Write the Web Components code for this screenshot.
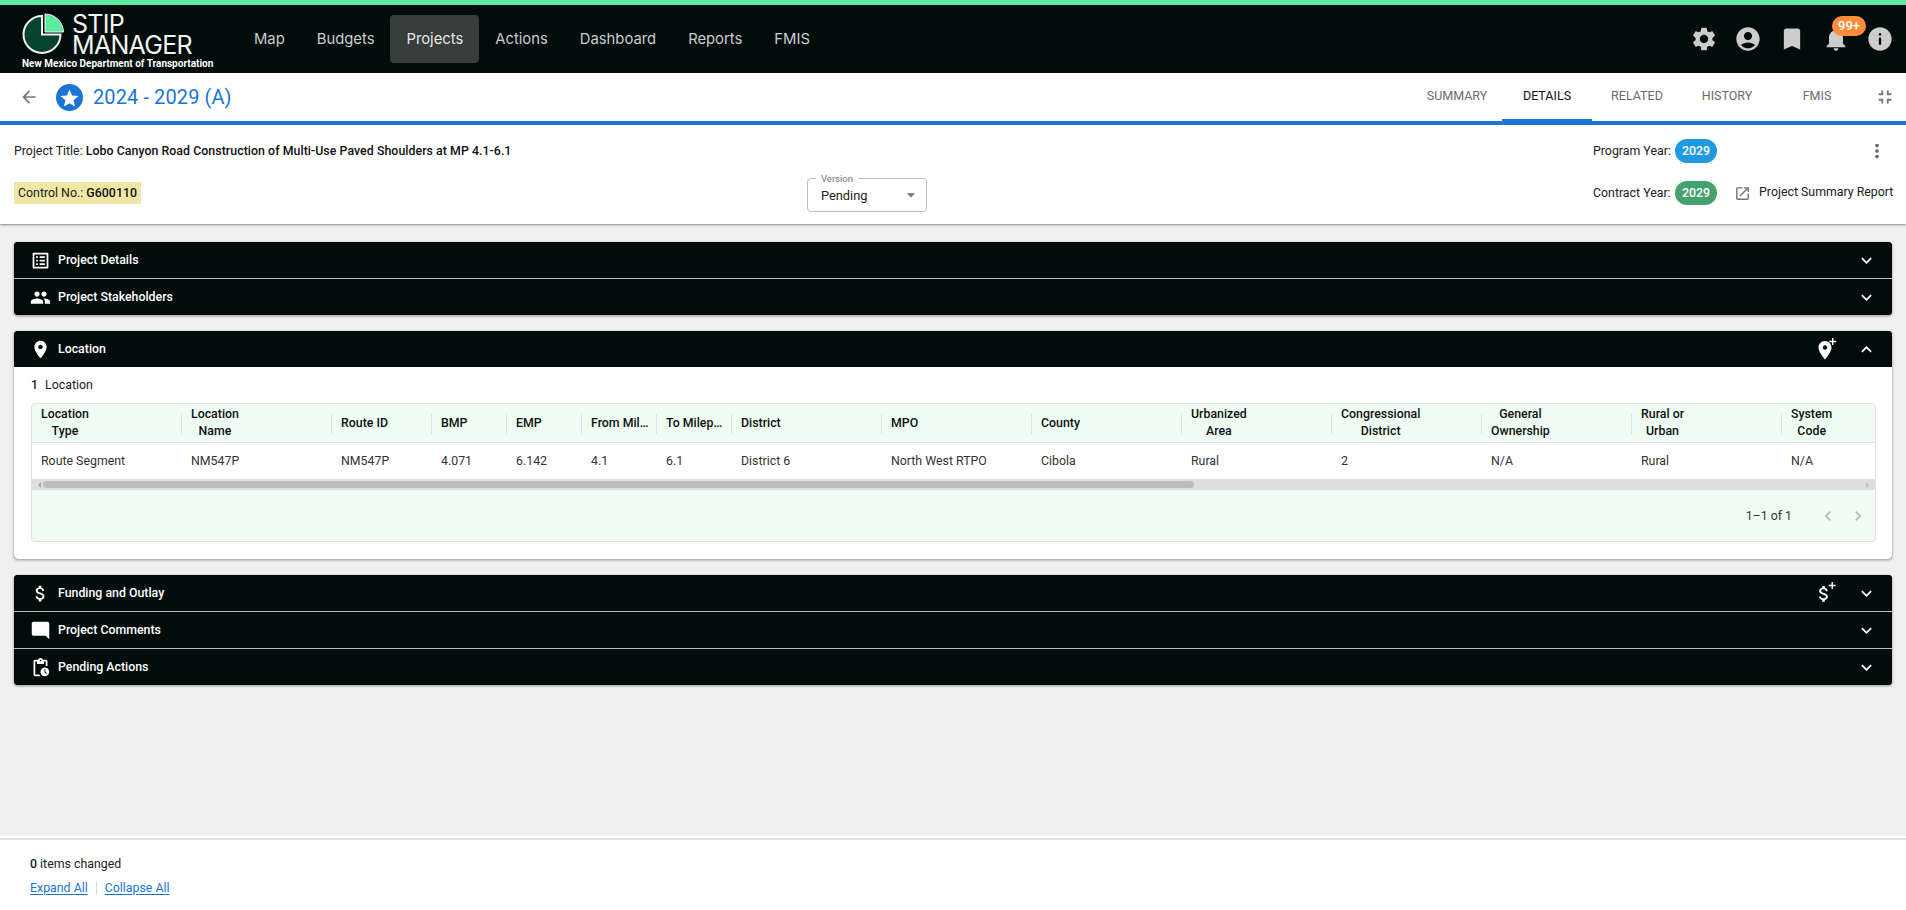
<!DOCTYPE html>
<html>
<head>
<meta charset="utf-8">
<title>STIP Manager</title>
<style>
  html, body { margin: 0; height: 100%; overflow: hidden; }
  body { font-family: Roboto, "Liberation Sans", sans-serif; font-size: 12.35px; color: #212121; background: #f0f0f0; }
  stip-page { height: 910px; }
  acc-group { margin-bottom: 16px; }
</style>
</head>
<body>
<stip-page>
  <app-header></app-header>
  <record-bar></record-bar>
  <project-summary></project-summary>
  <acc-group>
    <acc-row icon="listAlt">Project Details</acc-row>
    <acc-row icon="people">Project Stakeholders</acc-row>
  </acc-group>
  <acc-group>
    <acc-row icon="place" action="addPlace" open>Location</acc-row>
    <location-panel></location-panel>
  </acc-group>
  <acc-group>
    <acc-row icon="money" action="addMoney">Funding and Outlay</acc-row>
    <acc-row icon="comment">Project Comments</acc-row>
    <acc-row icon="pending">Pending Actions</acc-row>
  </acc-group>
  <changes-bar slot="footer"></changes-bar>
</stip-page>

<script>
const ICONS = {
  settings: 'M19.14 12.94c.04-.3.06-.61.06-.94 0-.32-.02-.64-.07-.94l2.03-1.58c.18-.14.23-.41.12-.61l-1.92-3.32c-.12-.22-.37-.29-.59-.22l-2.39.96c-.5-.38-1.03-.7-1.62-.94l-.36-2.54c-.04-.24-.24-.41-.48-.41h-3.84c-.24 0-.43.17-.47.41l-.36 2.54c-.59.24-1.13.57-1.62.94l-2.39-.96c-.22-.08-.47 0-.59.22L2.74 8.87c-.12.21-.08.47.12.61l2.03 1.58c-.05.3-.09.63-.09.94s.02.64.07.94l-2.03 1.58c-.18.14-.23.41-.12.61l1.92 3.32c.12.22.37.29.59.22l2.39-.96c.5.38 1.03.7 1.62.94l.36 2.54c.05.24.24.41.48.41h3.84c.24 0 .44-.17.47-.41l.36-2.54c.59-.24 1.13-.56 1.62-.94l2.39.96c.22.08.47 0 .59-.22l1.92-3.32c.12-.22.07-.47-.12-.61l-2.01-1.58zM12 15.6c-1.98 0-3.6-1.62-3.6-3.6s1.62-3.6 3.6-3.6 3.6 1.62 3.6 3.6-1.62 3.6-3.6 3.6z',
  account: 'M12 2C6.48 2 2 6.48 2 12s4.48 10 10 10 10-4.48 10-10S17.52 2 12 2zm0 4c1.93 0 3.5 1.57 3.5 3.5S13.93 13 12 13s-3.5-1.57-3.5-3.5S10.07 6 12 6zm0 14c-2.03 0-4.43-.82-6.14-2.88C7.55 15.8 9.68 15 12 15s4.45.8 6.14 2.12C16.43 19.18 14.03 20 12 20z',
  bookmark: 'M17 3H7c-1.1 0-1.99.9-1.99 2L5 21l7-3 7 3V5c0-1.1-.9-2-2-2z',
  bell: 'M12 22c1.1 0 2-.9 2-2h-4c0 1.1.89 2 2 2zm6-6v-5c0-3.07-1.64-5.64-4.5-6.32V4c0-.83-.67-1.5-1.5-1.5s-1.5.67-1.5 1.5v.68C7.63 5.36 6 7.92 6 11v5l-2 2v1h16v-1l-2-2z',
  info: 'M12 2C6.48 2 2 6.48 2 12s4.48 10 10 10 10-4.48 10-10S17.52 2 12 2zm1 15h-2v-6h2v6zm0-8h-2V7h2v2z',
  back: 'M20 11H7.83l5.59-5.59L12 4l-8 8 8 8 1.41-1.41L7.83 13H20v-2z',
  shrink: 'M5 16h3v3h2v-5H5v2zm3-8H5v2h5V5H8v3zm6 11h2v-3h3v-2h-5v5zm2-11V5h-2v5h5V8h-3z',
  listAlt: 'M19 5v14H5V5h14m1.1-2H3.9c-.5 0-.9.4-.9.9v16.2c0 .4.4.9.9.9h16.2c.4 0 .9-.5.9-.9V3.9c0-.5-.5-.9-.9-.9zM11 7h6v2h-6V7zm0 4h6v2h-6v-2zm0 4h6v2h-6zM7 7h2v2H7zm0 4h2v2H7zm0 4h2v2H7z',
  people: 'M16 11c1.66 0 2.99-1.34 2.99-3S17.66 5 16 5c-1.66 0-3 1.34-3 3s1.34 3 3 3zm-8 0c1.66 0 2.99-1.34 2.99-3S9.66 5 8 5C6.34 5 5 6.34 5 8s1.34 3 3 3zm0 2c-2.33 0-7 1.17-7 3.5V19h14v-2.5c0-2.33-4.67-3.5-7-3.5zm8 0c-.29 0-.62.02-.97.05 1.16.84 1.97 1.97 1.97 3.45V19h6v-2.5c0-2.33-4.67-3.5-7-3.5z',
  place: 'M12 2C8.13 2 5 5.13 5 9c0 5.25 7 13 7 13s7-7.75 7-13c0-3.87-3.13-7-7-7zm0 9.5c-1.38 0-2.5-1.12-2.5-2.5s1.12-2.5 2.5-2.5 2.5 1.12 2.5 2.5-1.12 2.5-2.5 2.5z',
  addPlace: 'M11 4C7.4 4 4.500 6.900 4.500 10.500 4.500 15.400 11 22.500 11 22.500s6.500-7.100 6.500-12c0-3.600-2.900-6.500-6.500-6.500zm0 8.800c-1.270 0-2.300-1.030-2.300-2.300S9.730 8.200 11 8.200s2.300 1.030 2.300 2.300-1.030 2.300-2.300 2.300zM18 1h1.400v2.800h2.800v1.400h-2.800V8H18V5.200h-2.800V3.800H18z',
  money: 'M11.8 10.900c-2.270-.590-3-1.200-3-2.150 0-1.090 1.010-1.850 2.700-1.850 1.780 0 2.440.850 2.500 2.100h2.210c-.070-1.720-1.120-3.300-3.210-3.810V3h-3v2.160c-1.940.420-3.500 1.680-3.500 3.610 0 2.310 1.910 3.460 4.700 4.130 2.500.600 3 1.480 3 2.410 0 .690-.490 1.790-2.700 1.790-2.060 0-2.870-.920-2.980-2.100h-2.200c.120 2.190 1.760 3.420 3.680 3.830V21h3v-2.150c1.950-.370 3.500-1.500 3.500-3.550 0-2.840-2.430-3.810-4.700-4.400z',
  addMoney: 'M9.800 11.900c-2-.520-2.650-1.060-2.650-1.900 0-.960.890-1.630 2.380-1.630 1.570 0 2.150.750 2.200 1.850h1.950c-.060-1.520-.990-2.910-2.830-3.360V5H8.200v1.840C6.490 7.210 5.100 8.320 5.100 10.020c0 2.040 1.690 3.050 4.150 3.640 2.200.530 2.650 1.310 2.650 2.130 0 .610-.430 1.580-2.380 1.580-1.820 0-2.530-.810-2.630-1.850H4.950c.110 1.930 1.550 3.020 3.250 3.380V20.800h2.650v-1.900c1.720-.330 3.090-1.320 3.090-3.130 0-2.510-2.150-3.360-4.140-3.870zM17.500 1h1.400v2.800h2.800v1.400h-2.800V8h-1.400V5.200h-2.800V3.800h2.800z',
  comment: 'M4 2h16c1.100 0 2 .9 2 2v18l-4-4H4c-1.100 0-2-.9-2-2V4c0-1.100.9-2 2-2z',
  pending: 'M17 12c-2.760 0-5 2.240-5 5s2.240 5 5 5 5-2.240 5-5-2.240-5-5-5zm1.650 7.350L16.500 17.200V14h1v2.790l1.850 1.850-.7.710zM18 3h-3.180C14.400 1.840 13.300 1 12 1s-2.400.840-2.820 2H6c-1.100 0-2 .9-2 2v15c0 1.100.9 2 2 2h6.110c-.590-.570-1.070-1.250-1.420-2H6V5h2v3h8V5h2v5.080c.710.100 1.380.310 2 .600V5c0-1.100-.9-2-2-2zm-6 2c-.550 0-1-.450-1-1s.450-1 1-1 1 .450 1 1-.450 1-1 1z',
  expand: 'M16.59 8.590L12 13.170 7.410 8.590 6 10l6 6 6-6z',
  collapse: 'M12 8l-6 6 1.410 1.410L12 10.830l4.590 4.580L18 14z',
  launch: 'M19 19H5V5h7V3H5c-1.110 0-2 .9-2 2v14c0 1.100.890 2 2 2h14c1.100 0 2-.9 2-2v-7h-2v7zM14 3v2h3.590l-9.830 9.830 1.410 1.410L19 6.410V10h2V3h-7z',
  more: 'M12 8c1.100 0 2-.9 2-2s-.9-2-2-2-2 .9-2 2 .9 2 2 2zm0 2c-1.100 0-2 .9-2 2s.9 2 2 2 2-.9 2-2-.9-2-2-2zm0 6c-1.100 0-2 .9-2 2s.9 2 2 2 2-.9 2-2-.9-2-2-2z',
  left: 'M15.410 7.410L14 6l-6 6 6 6 1.410-1.410L10.830 12z',
  right: 'M10 6L8.590 7.410 13.170 12l-4.580 4.590L10 18l6-6z',
  dropdown: 'M7 10l5 5 5-5z'
};

class XIcon extends HTMLElement {
  connectedCallback() {
    const size = this.getAttribute('size') || 24;
    const root = this.shadowRoot || this.attachShadow({ mode: 'open' });
    root.innerHTML = `
      <style>
        :host { display: inline-flex; flex: none; width: ${size}px; height: ${size}px; color: inherit; }
        svg { width: 100%; height: 100%; fill: currentColor; display: block; }
      </style>
      <svg viewBox="0 0 24 24"><path d="${ICONS[this.getAttribute('name')]}"></path></svg>`;
  }
}
customElements.define('x-icon', XIcon);

class StipPage extends HTMLElement {
  constructor() {
    super();
    this.attachShadow({ mode: 'open' });
    this.shadowRoot.innerHTML = `
      <style>
        :host { display: flex; flex-direction: column; background: #f0f0f0; }
        .head { flex: none; }
        .main { flex: 1; min-height: 0; padding: 18px 14px 0; }
        .foot { flex: none; }
      </style>
      <div class="head"><slot name="top"></slot></div>
      <div class="main"><slot></slot></div>
      <div class="foot"><slot name="footer"></slot></div>`;
  }
  connectedCallback() {
    ['app-header', 'record-bar', 'project-summary'].forEach(tag => {
      this.querySelector(tag).slot = 'top';
    });
  }
}
customElements.define('stip-page', StipPage);

class AppHeader extends HTMLElement {
  constructor() {
    super();
    this.attachShadow({ mode: 'open' });
    const nav = ['Map', 'Budgets', 'Projects', 'Actions', 'Dashboard', 'Reports', 'FMIS'];
    this.shadowRoot.innerHTML = `
      <style>
        :host { display: flex; align-items: center; height: 68px; background: #020d0b; border-top: 5px solid #5fe8a0; color: #ccc; padding-right: 12px; }
        .logo { width: 216px; padding-left: 22px; flex: none; }
        .logo-top { display: flex; align-items: center; gap: 6px; height: 46px; margin-top: 3px; }
        .logo svg { flex: none; width: 44px; height: 44px; }
        .brand { font-family: Inter, sans-serif; font-weight: 400; font-size: 25px; line-height: 21px; color: #f2f2f2; letter-spacing: -.7px; }
        .tag { font-family: Roboto, sans-serif; font-weight: 700; font-size: 10px; line-height: 12px; color: #fff; white-space: nowrap; }
        nav { display: flex; height: 48px; align-items: center; }
        nav a { display: flex; align-items: center; height: 48px; padding: 0 16px; font-family: Inter, sans-serif; font-size: 14.8px; color: #ccc; border-radius: 4px; }
        nav a.on { background: #363d3b; color: #e6e6e6; }
        .tools { margin-left: auto; display: flex; gap: 16px; align-items: center; }
        .bell { position: relative; display: flex; }
        .badge { position: absolute; left: 10px; top: -9px; width: 34px; height: 20px; border-radius: 10px; background: #ff8c3a; color: #fff; font-size: 13px; line-height: 20px; text-align: center; font-weight: 500; }
      </style>
      <div class="logo">
        <div class="logo-top">
          <svg viewBox="0 0 44 44">
            <path d="M20 3 A18.500 18.500 0 1 0 38.500 21.500 L20 21.500 Z" fill="#06432f" stroke="#f0f0f0" stroke-width="2"/>
            <path d="M23 1 A18.500 18.500 0 0 1 41.500 19 L23 19 Z" fill="#5fe8a0" stroke="#f0f0f0" stroke-width="1"/>
          </svg>
          <div class="brand">STIP<br>MANAGER</div>
        </div>
        <div class="tag">New Mexico Department of Transportation</div>
      </div>
      <nav>${nav.map(n => `<a class="${n === 'Projects' ? 'on' : ''}">${n}</a>`).join('')}</nav>
      <div class="tools">
        <x-icon name="settings" size="28"></x-icon>
        <x-icon name="account" size="28"></x-icon>
        <x-icon name="bookmark" size="28"></x-icon>
        <span class="bell"><x-icon name="bell" size="28"></x-icon><span class="badge">99+</span></span>
        <x-icon name="info" size="28"></x-icon>
      </div>`;
  }
}
customElements.define('app-header', AppHeader);

class RecordBar extends HTMLElement {
  constructor() {
    super();
    this.attachShadow({ mode: 'open' });
    const tabs = ['SUMMARY', 'DETAILS', 'RELATED', 'HISTORY', 'FMIS'];
    this.shadowRoot.innerHTML = `
      <style>
        :host { display: flex; align-items: center; height: 48px; background: #fff; border-bottom: 4px solid #1976d2; padding-left: 19px; }
        .back { color: #757575; }
        .star { margin-left: 17px; width: 27px; height: 27px; display: block; flex: none; }
        h1 { margin: 0 0 0 10px; font-size: 20px; font-weight: 400; color: #1976d2; letter-spacing: .1px; }
        .tabs { margin-left: auto; display: flex; height: 48px; }
        .tab { width: 90px; display: flex; align-items: center; justify-content: center; font-size: 12.5px; color: #6b6b6b; padding-bottom: 3px; box-sizing: border-box; }
        .tab.on { color: #111; box-shadow: inset 0 -2px 0 #1976d2; }
        .shrink { color: #777; margin: 0 10px 0 12px; }
      </style>
      <x-icon class="back" name="back" size="20"></x-icon>
      <svg class="star" viewBox="0 0 27 27">
        <circle cx="13.500" cy="13.500" r="13.500" fill="#1976d2"/>
        <path fill="#fff" d="M13.500 19.200l5.560 3.360-1.480-6.330 4.920-4.260-6.470-.55L13.500 5.450l-2.530 5.970-6.470.55 4.920 4.260-1.480 6.330z"/>
      </svg>
      <h1>2024 - 2029 (A)</h1>
      <div class="tabs">${tabs.map(t => `<div class="tab ${t === 'DETAILS' ? 'on' : ''}">${t}</div>`).join('')}</div>
      <x-icon class="shrink" name="shrink" size="22"></x-icon>`;
  }
}
customElements.define('record-bar', RecordBar);

class ProjectSummary extends HTMLElement {
  constructor() {
    super();
    this.attachShadow({ mode: 'open' });
    this.shadowRoot.innerHTML = `
      <style>
        :host { display: grid; grid-template-columns: 793px 120px 1fr; grid-template-rows: 52px 47px; background: #fff; padding: 0 13px 0 14px; box-shadow: 0 1px 2px rgba(0,0,0,.45); position: relative; color: #212121; }
        b { font-weight: 500; color: #111; letter-spacing: .05px; }
        .title { grid-column: 1 / 3; align-self: center; }
        .top-right { display: flex; align-items: center; justify-content: space-between; padding-left: 666px; }
        .year { display: flex; align-items: center; }
        .year label { width: 82px; white-space: nowrap; }
        .chip { display: inline-block; height: 24px; line-height: 24px; padding: 0 7px; border-radius: 12px; color: #fff; font-weight: 500; }
        .blue { background: #1e9be0; }
        .green { background: #45a26f; }
        .dots { color: #666; margin-right: 5px; }
        .control { align-self: start; justify-self: start; margin-top: 5px; background: #f0e6a6; height: 22px; line-height: 22px; padding: 0 4px; }
        .bottom-right { display: flex; align-items: center; padding-left: 666px; height: 32px; }
        .report { display: flex; align-items: center; margin-left: 17px; white-space: nowrap; gap: 8px; margin-top: -2px; }
        .report x-icon { color: #757575; margin-top: 3px; }
        version-select { align-self: start; margin-top: 1px; }
      </style>
      <div class="title">Project Title: <b>Lobo Canyon Road Construction of Multi-Use Paved Shoulders at MP 4.1-6.1</b></div>
      <div class="top-right">
        <div class="year"><label>Program Year:</label><span class="chip blue">2029</span></div>
        <x-icon class="dots" name="more" size="22"></x-icon>
      </div>
      <div class="control">Control No.: <b>G600110</b></div>
      <version-select></version-select>
      <div class="bottom-right">
        <div class="year"><label>Contract Year:</label><span class="chip green">2029</span></div>
        <div class="report"><x-icon name="launch" size="17"></x-icon><span>Project Summary Report</span></div>
      </div>`;
  }
}
customElements.define('project-summary', ProjectSummary);

class VersionSelect extends HTMLElement {
  constructor() {
    super();
    this.attachShadow({ mode: 'open' });
    this.shadowRoot.innerHTML = `
      <style>
        :host { display: flex; align-items: center; position: relative; width: 120px; height: 34px; box-sizing: border-box; border: 1px solid #bdbdbd; border-radius: 4px; padding-left: 13px; font-size: 12.8px; color: #212121; }
        label { position: absolute; left: 8px; top: -6px; background: #fff; padding: 0 5px; font-size: 9.5px; line-height: 11px; color: #757575; }
        x-icon { margin-left: auto; margin-right: 5px; color: #757575; }
      </style>
      <label>Version</label><span>Pending</span><x-icon name="dropdown" size="20"></x-icon>`;
  }
}
customElements.define('version-select', VersionSelect);

class AccGroup extends HTMLElement {
  constructor() {
    super();
    this.attachShadow({ mode: 'open' });
    this.shadowRoot.innerHTML = `
      <style>
        :host { display: block; border-radius: 4px; box-shadow: 0 1px 3px rgba(0,0,0,.4); overflow: hidden; background: #020d0b; }
      </style>
      <slot></slot>`;
  }
}
customElements.define('acc-group', AccGroup);

class AccRow extends HTMLElement {
  constructor() {
    super();
    this.attachShadow({ mode: 'open' });
  }
  connectedCallback() {
    const action = this.getAttribute('action');
    const open = this.hasAttribute('open');
    this.shadowRoot.innerHTML = `
      <style>
        :host { display: flex; align-items: center; height: 36px; background: #020d0b; color: #fff; padding: 0 15px 0 16px; font-weight: 500; }
        :host(:not(:last-of-type)) { border-bottom: 1px solid #bdbdbd; }
        .lead { margin-right: 7px; }
        .grow { flex: 1; padding-bottom: 1px; }
        .act { margin-right: 18px; }
      </style>
      <x-icon class="lead" name="${this.getAttribute('icon')}" size="21"></x-icon>
      <span class="grow"><slot></slot></span>
      ${action ? `<x-icon class="act" name="${action}" size="24"></x-icon>` : ''}
      <x-icon name="${open ? 'collapse' : 'expand'}" size="21"></x-icon>`;
  }
}
customElements.define('acc-row', AccRow);

class LocationPanel extends HTMLElement {
  constructor() {
    super();
    this.attachShadow({ mode: 'open' });
    const cols = [
      ['Location<br>Type', 'Route Segment'], ['Location<br>Name', 'NM547P'], ['Route ID', 'NM547P'],
      ['BMP', '4.071'], ['EMP', '6.142'], ['From Mil…', '4.1'], ['To Milep…', '6.1'],
      ['District', 'District 6'], ['MPO', 'North West RTPO'], ['County', 'Cibola'],
      ['Urbanized<br>Area', 'Rural'], ['Congressional<br>District', '2'], ['General<br>Ownership', 'N/A'],
      ['Rural or<br>Urban', 'Rural'], ['System<br>Code', 'N/A']
    ];
    this.shadowRoot.innerHTML = `
      <style>
        :host { display: block; background: #fff; padding: 7px 16px 17px 17px; color: #212121; }
        .count { height: 29px; line-height: 23px; }
        .count b { font-weight: 500; margin-right: 7px; }
        .table { border: 1px solid #dfe3e0; border-radius: 4px; background: #eefcf4; overflow: hidden; height: 139px; box-sizing: border-box; }
        .grid { display: grid; grid-template-columns: 150px 150px 100px 75px 75px 75px 75px repeat(8, 150px); grid-template-rows: 39px 36px; width: 1843px; overflow: hidden; }
        .h { display: flex; align-items: center; padding-left: 9px; font-weight: 500; border-bottom: 1px solid #dfe3e0; position: relative; color: #111; line-height: 17px; }
        .h span { display: inline-block; text-align: center; }
        .h:not(:first-child)::before { content: ''; position: absolute; left: -1px; top: 10px; height: 20px; width: 1px; background: #dfe3e0; }
        .c { display: flex; align-items: center; padding-left: 9px; background: #fff; color: #333; }
        .sb { display: flex; align-items: center; height: 11px; background: #dedede; }
        .sb i { width: 0; height: 0; border: 3px solid transparent; flex: none; }
        .sb .l { border-right-color: #aaa; margin-left: 3px; }
        .sb .r { border-left-color: #bdbdbd; margin-left: auto; margin-right: 3px; }
        .thumb { width: 1151px; height: 7px; margin-left: 2px; border-radius: 4px; background: #bdbdbd; }
        .pager { display: flex; align-items: center; justify-content: flex-end; height: 51px; padding-right: 7px; color: #333; }
        .pager span { margin-right: 16px; }
        .pager x-icon { color: #b4b8b6; margin-left: 10px; }
      </style>
      <div class="count"><b>1</b>Location</div>
      <div class="table">
        <div class="grid">
          ${cols.map(c => `<div class="h"><span>${c[0]}</span></div>`).join('')}
          ${cols.map(c => `<div class="c">${c[1]}</div>`).join('')}
        </div>
        <div class="sb"><i class="l"></i><div class="thumb"></div><i class="r"></i></div>
        <div class="pager"><span>1–1 of 1</span><x-icon name="left" size="20"></x-icon><x-icon name="right" size="20"></x-icon></div>
      </div>`;
  }
}
customElements.define('location-panel', LocationPanel);

class ChangesBar extends HTMLElement {
  constructor() {
    super();
    this.attachShadow({ mode: 'open' });
    this.shadowRoot.innerHTML = `
      <style>
        :host { display: block; height: 72px; box-sizing: border-box; background: #fff; border-top: 2px solid #e4e4e4; padding: 17px 30px 0; color: #212121; box-shadow: 0 -2px 0 #fff; }
        b { font-weight: 500; }
        .links { display: flex; align-items: center; margin-top: 10px; color: #1976d2; }
        .links a { text-decoration: underline; text-underline-offset: 2px; }
        .links i { width: 1px; height: 14px; background: #ddd; margin: 0 8px; }
      </style>
      <div><b>0</b> items changed</div>
      <div class="links"><a>Expand All</a><i></i><a>Collapse All</a></div>`;
  }
}
customElements.define('changes-bar', ChangesBar);
</script>
</body>
</html>
